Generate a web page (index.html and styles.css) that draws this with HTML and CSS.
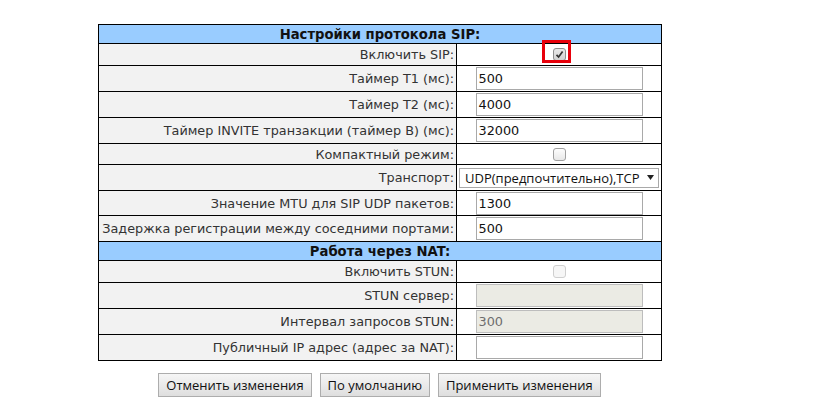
FILE: index.html
```html
<!DOCTYPE html>
<html lang="ru">
<head>
<meta charset="utf-8">
<title>SIP</title>
<link rel="stylesheet" href="styles.css">
</head>
<body>
<div class="page">
  <table class="settings">
    <colgroup><col class="col-label"><col class="col-value"></colgroup>
    <tr class="hdr"><th colspan="2">Настройки протокола SIP:</th></tr>
    <tr class="r22"><td class="lbl">Включить SIP:</td><td class="val"><span class="mark"><span class="cb checked"><svg width="9" height="9" viewBox="0 0 9 9"><path d="M1.5 4.8 L3.6 7 L7.6 1.6" fill="none" stroke="#333" stroke-width="1.7"/></svg></span></span></td></tr>
    <tr class="r26"><td class="lbl">Таймер T1 (мс):</td><td class="val"><span class="inp">500</span></td></tr>
    <tr class="r26"><td class="lbl">Таймер T2 (мс):</td><td class="val"><span class="inp">4000</span></td></tr>
    <tr class="r26"><td class="lbl">Таймер INVITE транзакции (таймер B) (мс):</td><td class="val"><span class="inp">32000</span></td></tr>
    <tr class="r21"><td class="lbl">Компактный режим:</td><td class="val"><span class="cb"></span></td></tr>
    <tr class="r26"><td class="lbl">Транспорт:</td><td class="val"><span class="sel"><span>UDP(предпочтительно),TCP</span><svg width="7" height="5" viewBox="0 0 7 5"><path d="M0 0 H7 L3.5 5 Z" fill="#222"/></svg></span></td></tr>
    <tr class="r25"><td class="lbl">Значение MTU для SIP UDP пакетов:</td><td class="val"><span class="inp">1300</span></td></tr>
    <tr class="r26"><td class="lbl">Задержка регистрации между соседними портами:</td><td class="val"><span class="inp">500</span></td></tr>
    <tr class="hdr"><th colspan="2">Работа через NAT:</th></tr>
    <tr class="r22"><td class="lbl">Включить STUN:</td><td class="val"><span class="cb disabled"></span></td></tr>
    <tr class="r26"><td class="lbl">STUN сервер:</td><td class="val"><span class="inp disabled"></span></td></tr>
    <tr class="r26"><td class="lbl">Интервал запросов STUN:</td><td class="val"><span class="inp disabled">300</span></td></tr>
    <tr class="r26"><td class="lbl">Публичный IP адрес (адрес за NAT):</td><td class="val"><span class="inp"></span></td></tr>
  </table>
  <div class="buttons">
    <button class="btn">Отменить изменения</button>
    <button class="btn">По умолчанию</button>
    <button class="btn">Применить изменения</button>
  </div>
</div>
</body>
</html>
```
FILE: styles.css
```css
html, body {
  margin: 0;
  padding: 0;
  background: #fff;
}
.page {
  padding: 24px 0 0 98px;
  width: 563px;
}
.settings {
  border-collapse: collapse;
  width: 563px;
  table-layout: fixed;
  font-family: "DejaVu Sans", Verdana, sans-serif;
  font-size: 12.8px;
  color: #333;
}
.col-label { width: 358px; }
.col-value { width: 205px; }
.settings td, .settings th {
  border: 1px solid #000;
  padding: 0 2px;
  white-space: nowrap;
}
.hdr { height: 19px; }
.hdr th {
  background: #99ccff;
  color: #111;
  font-weight: bold;
  font-size: 13.2px;
  text-align: center;
}
.r22 { height: 22px; }
.r21 { height: 21px; }
.r25 { height: 25px; }
.r26 { height: 26px; }
.lbl {
  background: #f2f2f2;
  text-align: right;
}
.val {
  background: #fff;
  text-align: center;
  font-size: 0;
}
.inp {
  display: inline-block;
  box-sizing: border-box;
  width: 167px;
  height: 23px;
  border: 1px solid #a9a9a9;
  vertical-align: middle;
  text-align: left;
  padding: 0 2px;
  font-family: "DejaVu Sans", Verdana, sans-serif;
  font-size: 12.8px;
  line-height: 21px;
  color: #111;
  background: #fff;
}
.inp.disabled {
  background: #ebebe4;
  border-color: #bdbdbd;
  color: #6d6d6d;
}
.cb {
  display: inline-flex;
  align-items: center;
  justify-content: center;
  box-sizing: border-box;
  width: 13px;
  height: 13px;
  border: 1px solid #a0a0a0;
  border-radius: 3px;
  background: linear-gradient(#fdfdfd, #e8e8e8);
  vertical-align: middle;
}
.cb.checked {
  background: linear-gradient(#e9e9e9, #d2d2d2);
  border-color: #8f8f8f;
}
.cb.disabled {
  border-color: #cfcfcf;
  background: #f6f6f6;
}
.mark {
  position: relative;
  display: inline-block;
  vertical-align: middle;
  font-size: 0;
}
.mark::after {
  content: "";
  position: absolute;
  left: -11px;
  top: -8px;
  width: 23px;
  height: 17px;
  border: 3px solid #e8000b;
}
.sel {
  display: flex;
  align-items: center;
  justify-content: space-between;
  box-sizing: border-box;
  width: 100%;
  height: 20px;
  border: 1px solid #a9a9a9;
  padding: 0 4px 0 5px;
  font-family: "Open Sans", "Noto Sans", sans-serif;
  font-size: 13px;
  color: #111;
  background: #fff;
  text-align: left;
}
.buttons {
  display: flex;
  justify-content: center;
  gap: 8px;
  margin-top: 12px;
  padding-left: 0;
}
.btn {
  box-sizing: border-box;
  height: 24px;
  padding: 0 7px;
  border: 1px solid #adadad;
  border-radius: 0;
  background: linear-gradient(#f6f6f6, #dedede);
  font-family: "Open Sans", "Noto Sans", sans-serif;
  font-size: 13px;
  color: #111;
}
```
